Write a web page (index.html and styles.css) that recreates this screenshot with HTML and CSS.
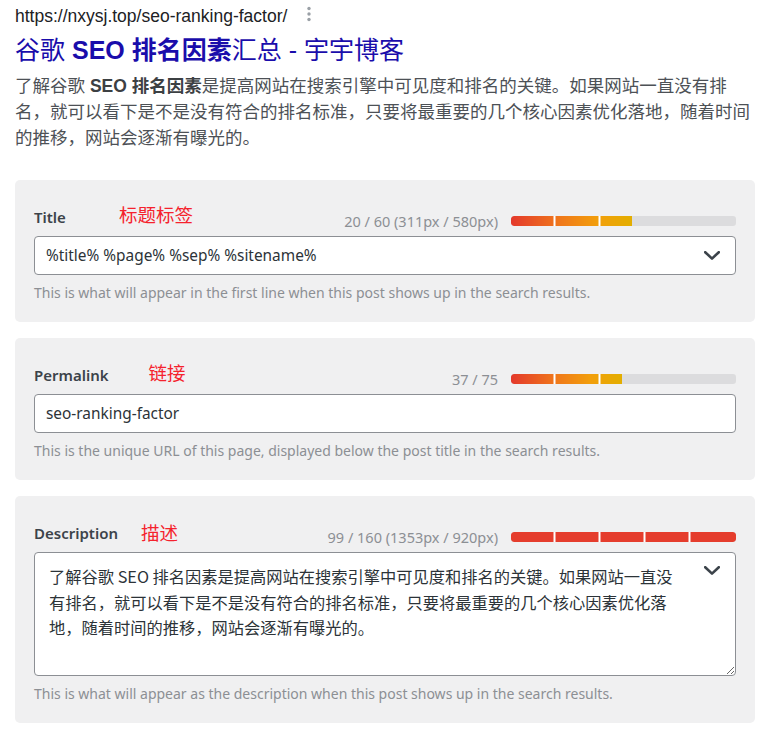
FILE: index.html
```html
<!DOCTYPE html>
<html lang="en">
  <head>
    <meta charset="UTF-8" />
    <meta name="viewport" content="width=device-width, initial-scale=1.0" />
    <title>SEO snippet</title>
    <link rel="stylesheet" href="styles.css">
  </head>
  <body>
    <div class="page">
      <div class="serp">
        <div class="serp-url">
          <span>https://nxysj.top/seo-ranking-factor/</span>
          <svg class="kebab" width="6" height="16" viewBox="0 0 6 16">
            <circle cx="3" cy="2.5" r="1.7" />
            <circle cx="3" cy="8" r="1.7" />
            <circle cx="3" cy="13.5" r="1.7" />
          </svg>
        </div>
        <div class="serp-title">谷歌 <b>SEO 排名因素</b>汇总 - 宇宇博客</div>
        <p class="serp-desc">了解谷歌 <b>SEO 排名因素</b>是提高网站在搜索引擎中可见度和排名的关键。如果网站一直没有排<br>名，就可以看下是不是没有符合的排名标准，只要将最重要的几个核心因素优化落地，随着时间的推移，网站会逐渐有曝光的。</p>
      </div>

      <div class="field">
        <div class="field-head">
          <span class="field-label">Title</span>
          <span class="note note-title">标题标签</span>
          <span class="count">20 / 60 (311px / 580px)</span>
          <div class="meter"><div class="meter-fill" style="width:53.6%"></div></div>
        </div>
        <div class="input">
          <span>%title% %page% %sep% %sitename%</span>
          <svg class="chevron" width="16" height="9" viewBox="0 0 16 9"><polyline points="1.2,1.2 8,7.6 14.8,1.2" /></svg>
        </div>
        <p class="help">This is what will appear in the first line when this post shows up in the search results.</p>
      </div>

      <div class="field">
        <div class="field-head">
          <span class="field-label">Permalink</span>
          <span class="note note-link">链接</span>
          <span class="count">37 / 75</span>
          <div class="meter"><div class="meter-fill" style="width:49.3%"></div></div>
        </div>
        <div class="input">
          <span>seo-ranking-factor</span>
        </div>
        <p class="help">This is the unique URL of this page, displayed below the post title in the search results.</p>
      </div>

      <div class="field">
        <div class="field-head">
          <span class="field-label">Description</span>
          <span class="note note-desc">描述</span>
          <span class="count">99 / 160 (1353px / 920px)</span>
          <div class="meter"><div class="meter-fill over" style="width:100%"></div></div>
        </div>
        <div class="area-wrap">
          <textarea class="area" readonly>了解谷歌 SEO 排名因素是提高网站在搜索引擎中可见度和排名的关键。如果网站一直没有排名，就可以看下是不是没有符合的排名标准，只要将最重要的几个核心因素优化落地，随着时间的推移，网站会逐渐有曝光的。</textarea>
          <svg class="chevron area-chevron" width="16" height="9" viewBox="0 0 16 9"><polyline points="1.2,1.2 8,7.6 14.8,1.2" /></svg>
        </div>
        <p class="help">This is what will appear as the description when this post shows up in the search results.</p>
      </div>
    </div>
  </body>
</html>
```

FILE: styles.css
```css
* {
  margin: 0;
  padding: 0;
  box-sizing: border-box;
}

body {
  background: #fff;
  font-family: "Noto Sans", "Noto Sans CJK SC", sans-serif;
}

.page {
  width: 740px;
  margin-left: 15px;
  padding-top: 4px;
}

/* google result */
.serp-url {
  display: flex;
  align-items: center;
  height: 24px;
  font-family: "Liberation Sans", "Noto Sans CJK SC", sans-serif;
  font-size: 17.5px;
  color: #202124;
}
.kebab {
  margin-left: 19px;
  margin-top: -4px;
  fill: #9aa0a6;
}
.serp-title {
  margin-top: 4px;
  line-height: 36px;
  font-family: "Liberation Sans", "Noto Sans CJK SC", sans-serif;
  font-size: 25px;
  color: #1a0dab;
}
.serp-desc {
  margin-top: 5px;
  line-height: 26px;
  font-family: "Liberation Sans", "Noto Sans CJK SC", sans-serif;
  font-size: 17.5px;
  color: #4d5156;
}
.serp-desc b {
  color: #3c4043;
}

/* fields */
.field {
  background: #f0f0f1;
  border-radius: 5px;
  padding: 27px 19px 19px;
  margin-top: 16px;
}
.serp + .field {
  margin-top: 29px;
}
.field-head {
  display: flex;
  height: 24px;
  margin-bottom: 5px;
}
.field-label {
  align-self: flex-start;
  line-height: 20px;
  font-size: 15px;
  font-weight: 600;
  color: #3c434a;
}
.note {
  align-self: flex-start;
  line-height: 20px;
  font-size: 18.5px;
  color: #f5222d;
  font-family: "Noto Sans CJK SC", sans-serif;
}
.note-title { margin-left: 53px; margin-top: -3px; }
.note-link { margin-left: 40px; margin-top: -3px; }
.note-desc { margin-left: 23px; margin-top: -1px; }

.count {
  margin-left: auto;
  align-self: flex-end;
  line-height: 20px;
  font-size: 14.5px;
  color: #8c8f94;
}
.meter {
  align-self: flex-end;
  margin: 0 0 5px 13px;
  width: 225px;
  height: 10px;
  background: #dcdcde;
  border-radius: 3px;
  overflow: hidden;
}
.meter-fill {
  height: 100%;
  border-radius: 3px 0 0 3px;
  background:
    repeating-linear-gradient(90deg, transparent 0 42px, rgba(255, 255, 255, 0.5) 42px 43px, #fff 43px 44px, rgba(255, 255, 255, 0.5) 44px 45px),
    linear-gradient(90deg, #e4392c, #f07a1a 42%, #f29f0b 72%, #e3ae00);
  background-size: 180px 100%, auto;
  background-repeat: no-repeat;
}
.meter-fill.over {
  border-radius: 3px;
  background:
    repeating-linear-gradient(90deg, transparent 0 42px, rgba(255, 255, 255, 0.5) 42px 43px, #fff 43px 44px, rgba(255, 255, 255, 0.5) 44px 45px),
    #e53d2d;
  background-size: 180px 100%, auto;
  background-repeat: no-repeat;
}

.input {
  display: flex;
  align-items: center;
  justify-content: space-between;
  height: 39px;
  padding: 0 15px 0 11px;
  background: #fff;
  border: 1px solid #8c8f94;
  border-radius: 4px;
  font-size: 15.4px;
  color: #2c3338;
}
.chevron {
  fill: none;
  stroke: #3c434a;
  stroke-width: 2.6;
  stroke-linecap: round;
  stroke-linejoin: round;
}

.area-wrap {
  position: relative;
}
.area {
  display: block;
  width: 100%;
  height: 124px;
  padding: 11px 59px 0 14px;
  background: #fff;
  border: 1px solid #8c8f94;
  border-radius: 4px;
  font-family: "Noto Sans CJK SC", sans-serif;
  font-size: 16.25px;
  line-height: 25.5px;
  color: #2c3338;
  resize: vertical;
  outline: none;
}
.area-chevron {
  position: absolute;
  top: 14px;
  right: 16px;
}

.help {
  margin-top: 8px;
  line-height: 20px;
  font-size: 14px;
  color: #8c8f94;
}
```
